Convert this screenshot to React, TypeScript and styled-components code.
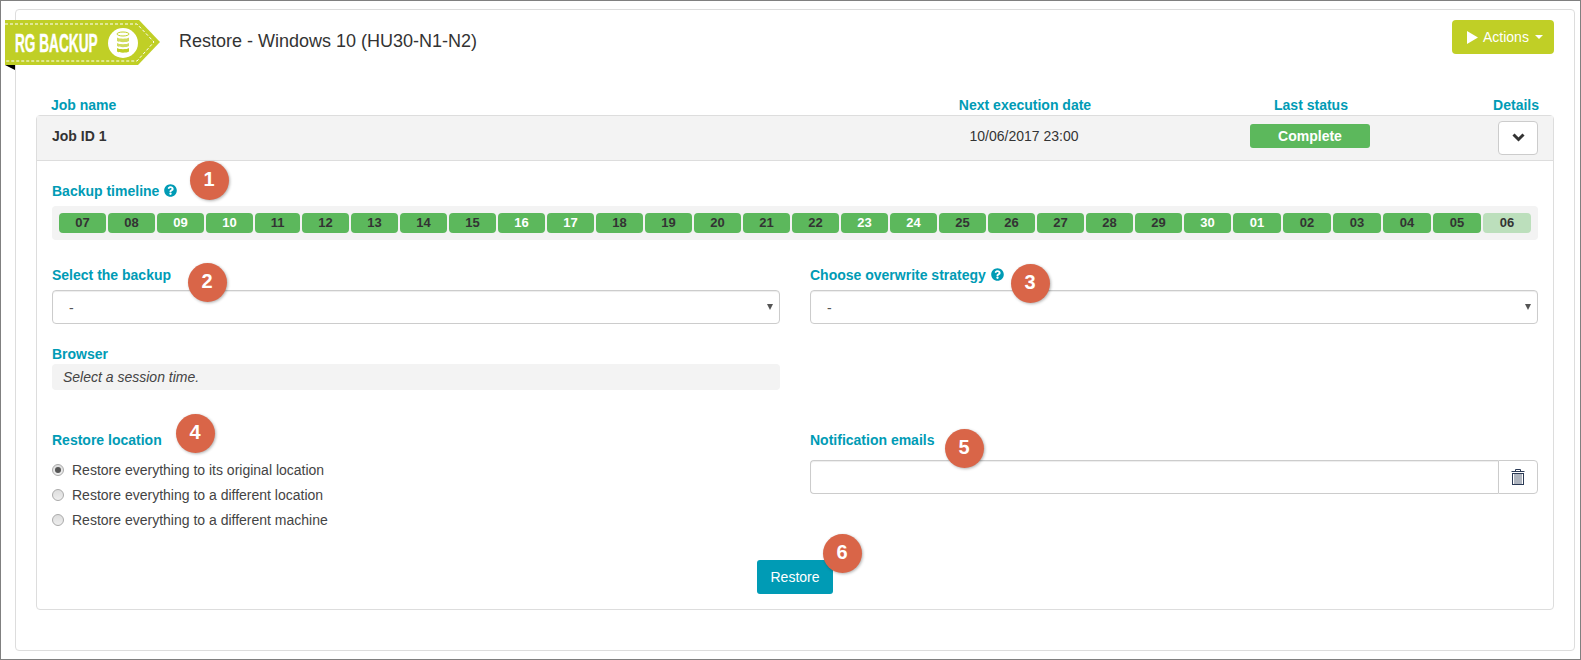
import React from 'react';
import styled, { createGlobalStyle } from 'styled-components';
import { FaQuestionCircle } from 'react-icons/fa';

const TEAL = '#009bb5';
const LIME = '#c0cf26';
const GREEN = '#5cb85c';
const BORDER = '#ccc';

const GlobalStyle = createGlobalStyle`
  html, body {
    margin: 0;
    padding: 0;
    background: #fff;
  }
  * {
    box-sizing: border-box;
  }
  body {
    font-family: 'Liberation Sans', Arial, sans-serif;
    font-size: 14px;
    color: #333;
  }
`;

const Frame = styled.div`
  width: 1581px;
  height: 660px;
  border: 1px solid #808080;
  padding: 8px 5px 0 14px;
  overflow: hidden;
`;

const Panel = styled.div`
  position: relative;
  height: 642px;
  border: 1px solid #ddd;
  border-radius: 4px;
  padding: 10px 20px 0;
`;

const Ribbon = styled.svg`
  position: absolute;
  left: -11px;
  top: 10px;
`;

const Toolbar = styled.div`
  display: flex;
  justify-content: space-between;
  align-items: flex-start;
  height: 34px;
`;

const Title = styled.h1`
  margin: 10px 0 0 143px;
  font-size: 18px;
  line-height: 22px;
  font-weight: normal;
`;

const ActionsButton = styled.button`
  display: flex;
  align-items: center;
  width: 102px;
  height: 34px;
  padding: 0 0 0 15px;
  border: 0;
  border-radius: 4px;
  background: ${LIME};
  color: #fff;
  font: 14px 'Liberation Sans', Arial, sans-serif;

  svg {
    margin-right: 5px;
  }
`;

const Caret = styled.span`
  margin-left: 6px;
  border-top: 4px solid #fff;
  border-left: 4px solid transparent;
  border-right: 4px solid transparent;
`;

const JobGrid = styled.div`
  display: grid;
  grid-template-columns: 1fr 240px 332px 62px;
  align-items: center;
  justify-items: center;

  & > :first-child {
    justify-self: start;
  }
  & > :last-child {
    justify-self: end;
  }
`;

const ColumnHeads = styled(JobGrid)`
  margin-top: 41px;
  height: 20px;
  padding: 0 15px;
  color: ${TEAL};
  font-weight: bold;
  line-height: 20px;
`;

const JobPanel = styled.section`
  height: 495px;
  border: 1px solid #ddd;
  border-radius: 4px;
`;

const JobHeader = styled(JobGrid)`
  height: 45px;
  padding: 0 15px;
  background: #f3f3f3;
  border-bottom: 1px solid #ddd;
`;

const JobName = styled.strong`
  margin-bottom: 4px;
`;

const NextDate = styled.span`
  margin-bottom: 4px;
`;

const StatusBadge = styled.span`
  width: 120px;
  height: 24px;
  margin-bottom: 4px;
  border-radius: 3px;
  background: ${GREEN};
  color: #fff;
  font-weight: bold;
  line-height: 24px;
  text-align: center;
`;

const DetailsButton = styled.button`
  display: flex;
  align-items: center;
  justify-content: center;
  width: 40px;
  height: 34px;
  padding: 0 0 2px;
  border: 1px solid ${BORDER};
  border-radius: 4px;
  background: #fff;
`;

const JobBody = styled.div`
  position: relative;
  padding: 20px 15px 15px;
`;

const Label = styled.label<{ $gap?: number }>`
  display: block;
  height: 20px;
  margin-bottom: ${(p) => p.$gap ?? 5}px;
  color: ${TEAL};
  font-weight: bold;
  line-height: 20px;

  svg {
    margin-left: 5px;
    vertical-align: -1px;
  }
`;

const Timeline = styled.div`
  display: flex;
  gap: 2px;
  height: 34px;
  margin-bottom: 25px;
  padding: 7px;
  border-radius: 4px;
  background: #f3f3f3;
`;

const Day = styled.span<{ $width: number; $light: boolean; $pending: boolean }>`
  flex: none;
  width: ${(p) => p.$width}px;
  height: 20px;
  border-radius: 4px;
  background: ${(p) => (p.$pending ? '#bcdfbc' : GREEN)};
  color: ${(p) => (p.$light ? '#fff' : '#333')};
  font-size: 13px;
  font-weight: bold;
  line-height: 20px;
  text-align: center;
`;

const Columns = styled.div<{ $top?: number }>`
  display: grid;
  grid-template-columns: 728px 728px;
  column-gap: 30px;
  margin-top: ${(p) => p.$top ?? 0}px;
`;

const SelectWrap = styled.div`
  position: relative;
  margin-bottom: 20px;

  &::after {
    content: '';
    position: absolute;
    top: 14px;
    right: 7px;
    border-top: 6px solid #555;
    border-left: 3px solid transparent;
    border-right: 3px solid transparent;
  }
`;

const Select = styled.select`
  display: block;
  width: 100%;
  height: 34px;
  padding: 2px 0 0 16px;
  appearance: none;
  border: 1px solid ${BORDER};
  border-radius: 4px;
  background: #fff;
  box-shadow: inset 0 1px 1px rgba(0, 0, 0, 0.075);
  color: #555;
  font: 14px 'Liberation Sans', Arial, sans-serif;
`;

const BrowserBox = styled.div`
  height: 26px;
  padding-left: 11px;
  border-radius: 4px;
  background: #f3f3f3;
  color: #444;
  font-style: italic;
  line-height: 26px;
`;

const RadioRow = styled.label`
  display: flex;
  align-items: center;
  gap: 8px;
  height: 25px;
  color: #444;
`;

const Radio = styled.input`
  position: relative;
  width: 12px;
  height: 12px;
  margin: 0;
  appearance: none;
  border: 1px solid #aaa;
  border-radius: 50%;
  background: linear-gradient(#ddd, #eee);

  &:checked::after {
    content: '';
    position: absolute;
    left: 2px;
    top: 2px;
    width: 6px;
    height: 6px;
    border-radius: 50%;
    background: #555;
  }
`;

const InputGroup = styled.div`
  display: flex;
  height: 34px;
`;

const EmailInput = styled.input`
  flex: 1;
  min-width: 0;
  border: 1px solid ${BORDER};
  border-right: 0;
  border-radius: 4px 0 0 4px;
  box-shadow: inset 0 1px 1px rgba(0, 0, 0, 0.075);
`;

const TrashButton = styled.button`
  display: flex;
  align-items: center;
  justify-content: center;
  width: 40px;
  padding: 0;
  border: 1px solid ${BORDER};
  border-radius: 0 4px 4px 0;
  background: #fff;
`;

const Actions = styled.div`
  display: flex;
  justify-content: center;
  margin-top: 28px;
`;

const RestoreButton = styled.button`
  width: 76px;
  height: 34px;
  padding: 0;
  border: 0;
  border-radius: 3px;
  background: ${TEAL};
  color: #fff;
  font: 14px 'Liberation Sans', Arial, sans-serif;
`;

const StepBadge = styled.span<{ $cx: number; $cy: number }>`
  position: absolute;
  left: ${(p) => p.$cx - 56.5}px;
  top: ${(p) => p.$cy - 180.5}px;
  z-index: 2;
  width: 39px;
  height: 39px;
  border-radius: 50%;
  background: #d96548;
  box-shadow: 1px 1px 3px rgba(0, 0, 0, 0.3);
  color: #fff;
  font-size: 20px;
  font-weight: bold;
  line-height: 37px;
  text-align: center;
`;

const DAYS = [
  '07', '08', '09', '10', '11', '12', '13', '14', '15', '16', '17', '18', '19', '20', '21',
  '22', '23', '24', '25', '26', '27', '28', '29', '30', '01', '02', '03', '04', '05', '06',
];
const WEEKEND = ['09', '10', '16', '17', '23', '24', '30', '01'];

const dayWidth = (day: string, idx: number) => {
  if (day === '11') return 45;
  return idx >= 24 ? 48 : 47;
};

const STEPS = [
  { n: 1, x: 209, y: 180 },
  { n: 2, x: 207, y: 282 },
  { n: 3, x: 1030, y: 283 },
  { n: 4, x: 195, y: 433 },
  { n: 5, x: 964, y: 448 },
  { n: 6, x: 842, y: 553 },
];

const RADIOS = [
  'Restore everything to its original location',
  'Restore everything to a different location',
  'Restore everything to a different machine',
];

const Logo = () => (
  <Ribbon width="156" height="51" viewBox="5 20 156 51">
    <path d="M5 20H139L160 42L138 65H5Z" fill={LIME} />
    <path d="M15 65H5L15 70Z" fill="#000" />
    <path
      d="M5 24H137L154 42L137 61H5"
      fill="none"
      stroke="#fff"
      strokeWidth="1"
      strokeDasharray="3 2"
    />
    <text
      transform="translate(15 52) scale(0.546 1)"
      fill="#fff"
      stroke="#fff"
      strokeWidth="0.4"
      fontFamily="'Liberation Sans', Arial, sans-serif"
      fontSize="25"
      fontWeight="bold"
    >
      RG BACKUP
    </text>
    <circle cx="123" cy="43" r="15" fill="#fff" />
    <ellipse cx="123" cy="34" rx="6" ry="2" fill="none" stroke={LIME} strokeWidth="1" />
    <path d="M117 37.5c2 1.6 10 1.6 12 0v3.5c-2 1.6-10 1.6-12 0Z" fill={LIME} opacity="0.75" />
    <path d="M117 43c2 1.6 10 1.6 12 0v3c-2 1.6-10 1.6-12 0Z" fill={LIME} opacity="0.75" />
    <path d="M117 48c2 1.6 10 1.6 12 0v3.5c-2 1.6-10 1.6-12 0Z" fill={LIME} />
  </Ribbon>
);

const PlayIcon = () => (
  <svg width="11" height="13" viewBox="0 0 11 13">
    <path d="M0 0L11 6.5L0 13Z" fill="#fff" />
  </svg>
);

const ChevronIcon = () => (
  <svg width="13" height="9" viewBox="0 0 13 9">
    <path d="M1.5 1.5L6.5 6.5L11.5 1.5" fill="none" stroke="#333" strokeWidth="3" />
  </svg>
);

const TrashIcon = () => (
  <svg width="14" height="16" viewBox="0 0 14 16">
    <path d="M0.5 2.5H13.5M4.5 2V0.5H9.5V2" fill="none" stroke="#2b3a55" strokeWidth="1" />
    <rect x="1.5" y="4.5" width="11" height="11" fill="none" stroke="#2b3a55" strokeWidth="1" />
    <path d="M4 5V15M6 5V15M8 5V15M10 5V15" stroke="#2b3a55" strokeWidth="1" opacity="0.75" />
  </svg>
);

const App: React.FC = () => {
  return (
    <Frame>
      <GlobalStyle />
      <Panel>
        <Logo />
        <Toolbar>
          <Title>Restore - Windows 10 (HU30-N1-N2)</Title>
          <ActionsButton type="button">
            <PlayIcon />
            Actions
            <Caret />
          </ActionsButton>
        </Toolbar>

        <ColumnHeads>
          <span>Job name</span>
          <span>Next execution date</span>
          <span>Last status</span>
          <span>Details</span>
        </ColumnHeads>

        <JobPanel>
          <JobHeader>
            <JobName>Job ID 1</JobName>
            <NextDate>10/06/2017 23:00</NextDate>
            <StatusBadge>Complete</StatusBadge>
            <DetailsButton type="button">
              <ChevronIcon />
            </DetailsButton>
          </JobHeader>

          <JobBody>
            {STEPS.map((step) => (
              <StepBadge key={step.n} $cx={step.x} $cy={step.y}>
                {step.n}
              </StepBadge>
            ))}

            <Label>
              Backup timeline
              <FaQuestionCircle size={13} />
            </Label>
            <Timeline>
              {DAYS.map((day, idx) => (
                <Day
                  key={`${day}-${idx}`}
                  $width={dayWidth(day, idx)}
                  $light={WEEKEND.includes(day)}
                  $pending={idx === DAYS.length - 1}
                >
                  {day}
                </Day>
              ))}
            </Timeline>

            <Columns>
              <div>
                <Label>Select the backup</Label>
                <SelectWrap>
                  <Select defaultValue="-">
                    <option>-</option>
                  </Select>
                </SelectWrap>
                <Label $gap={0}>Browser</Label>
                <BrowserBox>Select a session time.</BrowserBox>
              </div>
              <div>
                <Label>
                  Choose overwrite strategy
                  <FaQuestionCircle size={13} />
                </Label>
                <SelectWrap>
                  <Select defaultValue="-">
                    <option>-</option>
                  </Select>
                </SelectWrap>
              </div>
            </Columns>

            <Columns $top={40}>
              <div>
                <Label $gap={7}>Restore location</Label>
                {RADIOS.map((text, idx) => (
                  <RadioRow key={text}>
                    <Radio type="radio" name="location" defaultChecked={idx === 0} />
                    {text}
                  </RadioRow>
                ))}
              </div>
              <div>
                <Label $gap={10}>Notification emails</Label>
                <InputGroup>
                  <EmailInput type="text" />
                  <TrashButton type="button">
                    <TrashIcon />
                  </TrashButton>
                </InputGroup>
              </div>
            </Columns>

            <Actions>
              <RestoreButton type="button">Restore</RestoreButton>
            </Actions>
          </JobBody>
        </JobPanel>
      </Panel>
    </Frame>
  );
};

export default App;
